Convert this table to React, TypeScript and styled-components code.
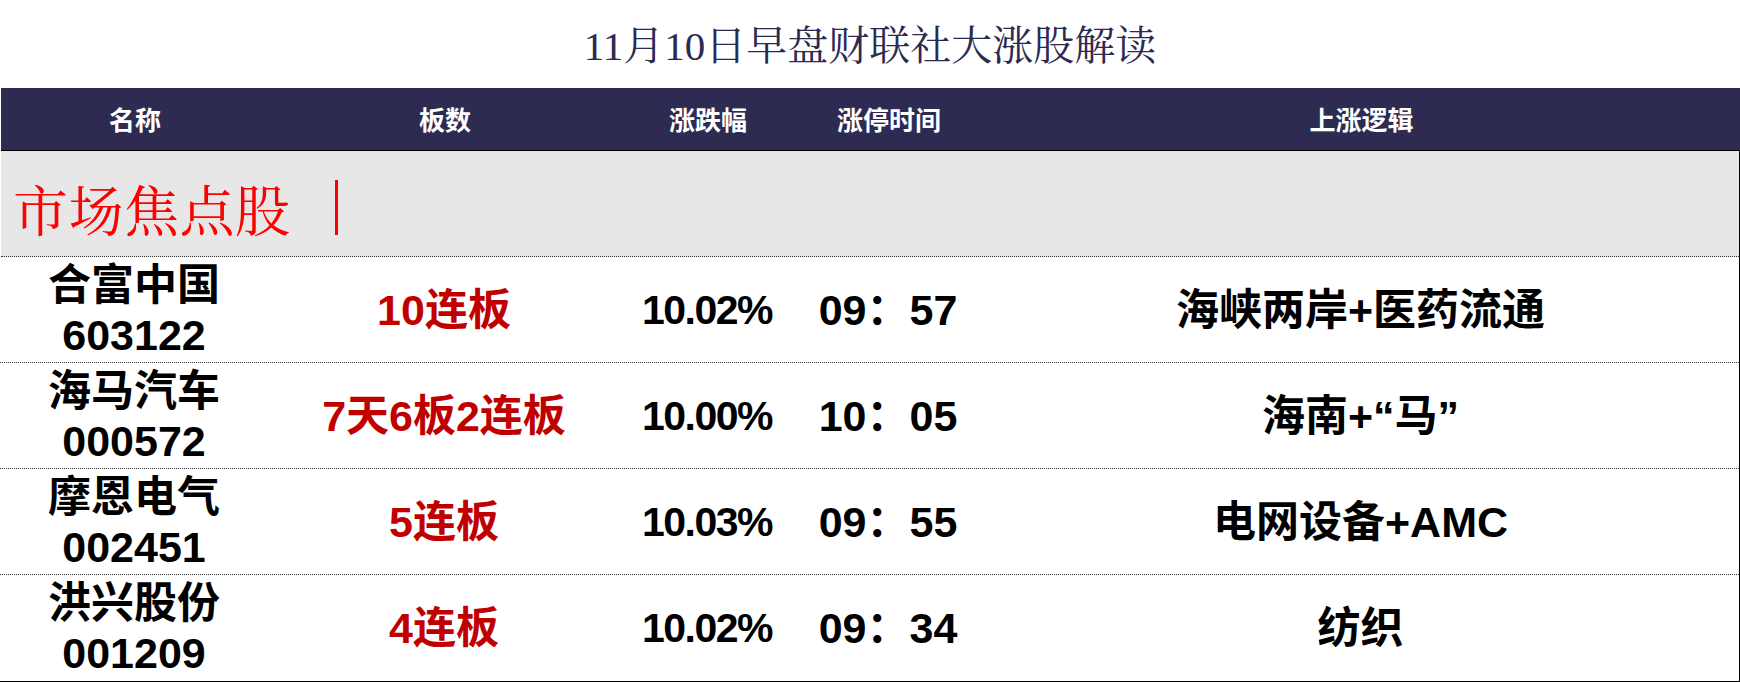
import React from "react";
import styled, { createGlobalStyle, css } from "styled-components";

const GlobalStyle = createGlobalStyle`
  html, body {
    margin: 0;
    padding: 0;
    background: #ffffff;
  }
  body {
    font-family: "Liberation Sans", "Noto Sans CJK SC", sans-serif;
  }
`;

const SERIF = `"Liberation Serif", "Noto Serif CJK SC", "Noto Sans CJK SC", serif`;
const SANS = `"Liberation Sans", "Noto Sans CJK SC", sans-serif`;

const COLUMNS = "268px 352px 174px 188px 1fr";

const Page = styled.div`
  width: 1740px;
  height: 682px;
  overflow: hidden;
`;

const Title = styled.h1`
  margin: 0;
  height: 88px;
  display: flex;
  align-items: center;
  justify-content: center;
  padding-bottom: 4px;
  box-sizing: border-box;
  font-family: ${SERIF};
  font-weight: normal;
  font-size: 41px;
  color: #2b2a51;
`;

const HeaderRow = styled.div`
  display: grid;
  grid-template-columns: ${COLUMNS};
  height: 63px;
  margin-left: 1px;
  background: #2d2b52;
  border-bottom: 1px solid #000;
  box-sizing: border-box;
`;

const HeaderCell = styled.div`
  display: flex;
  align-items: center;
  justify-content: center;
  font-family: ${SANS};
  font-weight: bold;
  font-size: 26px;
  color: #ffffff;
  padding-bottom: 2px;
`;

const Body = styled.div`
  border-right: 1px solid #000;
  border-bottom: 1px solid #000;
`;

const SectionBand = styled.div`
  height: 106px;
  margin-left: 1px;
  background: #e7e7e7;
  border-bottom: 1px dotted #333;
  box-sizing: border-box;
  display: flex;
  align-items: center;
  padding: 8px 0 0 12px;
`;

const SectionTitle = styled.span`
  font-family: ${SERIF};
  font-size: 55px;
  color: #ff0000;
  letter-spacing: 0.5px;
`;

const Divider = styled.span`
  display: inline-block;
  width: 3px;
  height: 55px;
  margin-left: 44px;
  background: #ff0000;
`;

const Row = styled.div<{ last?: boolean }>`
  display: grid;
  grid-template-columns: ${COLUMNS};
  height: 106px;
  box-sizing: border-box;
  ${({ last }) =>
    !last &&
    css`
      border-bottom: 1px dotted #333;
    `}
`;

const Cell = styled.div<{ red?: boolean; tight?: boolean }>`
  display: flex;
  flex-direction: column;
  align-items: center;
  justify-content: center;
  font-family: ${SANS};
  font-weight: bold;
  font-size: 43px;
  line-height: 50px;
  color: ${({ red }) => (red ? "#c00000" : "#000000")};
  white-space: nowrap;
  ${({ tight }) =>
    tight &&
    css`
      font-size: 41px;
      letter-spacing: -1.5px;
    `}
`;

type Stock = {
  name: string;
  code: string;
  boards: string;
  change: string;
  time: string;
  logic: string;
};

const stocks: Stock[] = [
  {
    name: "合富中国",
    code: "603122",
    boards: "10连板",
    change: "10.02%",
    time: "09：57",
    logic: "海峡两岸+医药流通",
  },
  {
    name: "海马汽车",
    code: "000572",
    boards: "7天6板2连板",
    change: "10.00%",
    time: "10：05",
    logic: "海南+“马”",
  },
  {
    name: "摩恩电气",
    code: "002451",
    boards: "5连板",
    change: "10.03%",
    time: "09：55",
    logic: "电网设备+AMC",
  },
  {
    name: "洪兴股份",
    code: "001209",
    boards: "4连板",
    change: "10.02%",
    time: "09：34",
    logic: "纺织",
  },
];

const headers = ["名称", "板数", "涨跌幅", "涨停时间", "上涨逻辑"];

const App = () => {
  return (
    <Page>
      <GlobalStyle />
      <Title>11月10日早盘财联社大涨股解读</Title>
      <HeaderRow>
        {headers.map((h) => (
          <HeaderCell key={h}>{h}</HeaderCell>
        ))}
      </HeaderRow>
      <Body>
        <SectionBand>
          <SectionTitle>市场焦点股</SectionTitle>
          <Divider />
        </SectionBand>
        {stocks.map((s, i) => (
          <Row key={s.code} last={i === stocks.length - 1}>
            <Cell>
              <span>{s.name}</span>
              <span>{s.code}</span>
            </Cell>
            <Cell red>{s.boards}</Cell>
            <Cell tight>{s.change}</Cell>
            <Cell>{s.time}</Cell>
            <Cell>{s.logic}</Cell>
          </Row>
        ))}
      </Body>
    </Page>
  );
};

export default App;
